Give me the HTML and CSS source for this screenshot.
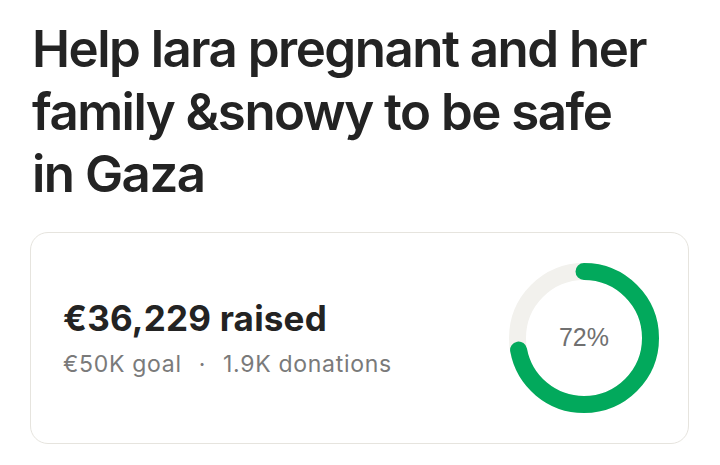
FILE: index.html
```html
<!DOCTYPE html>
<html lang="en">
<head>
<meta charset="utf-8">
<title>Help lara pregnant and her family &amp;snowy to be safe in Gaza</title>
<link rel="stylesheet" href="styles.css">
</head>
<body>
<main class="page">
  <h1 class="title">Help lara pregnant and her family &amp;snowy to be safe in Gaza</h1>

  <section class="progress-card">
    <div class="totals">
      <p class="raised">€36,229 raised</p>
      <p class="meta"><span>€50K goal</span><span class="sep">·</span><span>1.9K donations</span></p>
    </div>

    <div class="ring">
      <svg class="ring-svg" viewBox="0 0 150 150" width="150" height="150" aria-hidden="true">
        <circle class="ring-track" cx="75" cy="75" r="66.5"></circle>
        <circle class="ring-fill" cx="75" cy="75" r="66.5" style="stroke-dasharray: 300.8 417.8"></circle>
      </svg>
      <span class="ring-label">72%</span>
    </div>
  </section>
</main>
</body>
</html>
```

FILE: styles.css
```css
* {
  box-sizing: border-box;
}

html, body {
  margin: 0;
  padding: 0;
  background: #ffffff;
}

body {
  font-family: Inter, "Noto Sans", sans-serif;
  color: #232323;
}

.page {
  padding: 18px 31px 0 30px;
}

.title {
  margin: 0;
  max-width: 626px;
  padding-left: 2px;
  font-size: 51px;
  line-height: 62.5px;
  font-weight: 600;
  letter-spacing: -1.5px;
  color: #232323;
}

.progress-card {
  margin-top: 26px;
  height: 212px;
  border: 1px solid #e6e4de;
  border-radius: 18px;
  padding: 0 29px 0 32px;
  display: flex;
  align-items: center;
  justify-content: space-between;
}

.totals {
  display: flex;
  flex-direction: column;
  gap: 12px;
}

.raised {
  margin: 0;
  font-size: 35px;
  line-height: 40px;
  font-weight: 700;
  letter-spacing: 0.2px;
  color: #232323;
}

.meta {
  margin: 0;
  display: flex;
  align-items: baseline;
  font-size: 23px;
  line-height: 28px;
  font-weight: 400;
  letter-spacing: 0.7px;
  color: #7a7a7a;
}

.sep {
  padding: 0 17px;
}

.ring {
  position: relative;
  width: 150px;
  height: 150px;
  flex: none;
}

.ring-svg {
  display: block;
  transform: rotate(-90deg);
}

.ring-track {
  fill: none;
  stroke: #f2f1ed;
  stroke-width: 17;
}

.ring-fill {
  fill: none;
  stroke: #02a95c;
  stroke-width: 17;
  stroke-linecap: round;
}

.ring-label {
  position: absolute;
  inset: 0;
  display: flex;
  align-items: center;
  justify-content: center;
  font-family: "Liberation Sans", Arial, sans-serif;
  font-size: 25px;
  color: #707070;
}
```
